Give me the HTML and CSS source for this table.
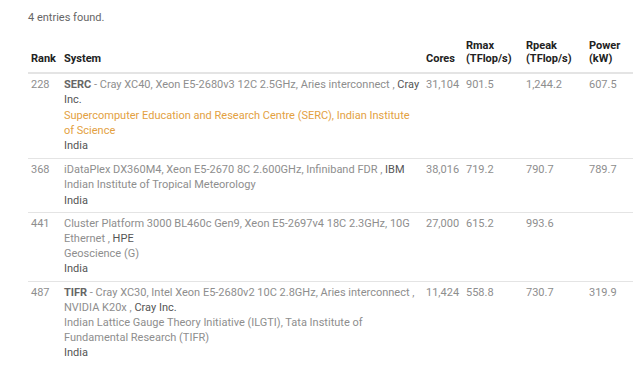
FILE: index.html
```html
<!DOCTYPE html>
<html>
<head>
<meta charset="utf-8">
<link rel="stylesheet" href="styles.css">
</head>
<body>
<div class="page">
  <p class="count">4 entries found.</p>
  <table class="list">
    <colgroup>
      <col class="c-rank"><col class="c-sys"><col class="c-cores"><col class="c-rmax"><col class="c-rpeak"><col class="c-power">
    </colgroup>
    <thead>
      <tr><th>Rank</th><th>System</th><th>Cores</th><th>Rmax<br>(TFlop/s)</th><th>Rpeak<br>(TFlop/s)</th><th>Power<br>(kW)</th></tr>
    </thead>
    <tbody>
      <tr class="first">
        <td>228</td>
        <td><b class="name">SERC</b> - Cray XC40, Xeon E5-2680v3 12C 2.5GHz, Aries interconnect , <span class="maker">Cray Inc.</span><br><span class="site orange">Supercomputer Education and Research Centre (SERC), Indian Institute of Science</span><br><span class="country">India</span></td>
        <td>31,104</td><td>901.5</td><td>1,244.2</td><td>607.5</td>
      </tr>
      <tr>
        <td>368</td>
        <td>iDataPlex DX360M4, Xeon E5-2670 8C 2.600GHz, Infiniband FDR , <span class="maker">IBM</span><br><span class="site">Indian Institute of Tropical Meteorology</span><br><span class="country">India</span></td>
        <td>38,016</td><td>719.2</td><td>790.7</td><td>789.7</td>
      </tr>
      <tr>
        <td>441</td>
        <td>Cluster Platform 3000 BL460c Gen9, Xeon E5-2697v4 18C 2.3GHz, 10G Ethernet , <span class="maker">HPE</span><br><span class="site">Geoscience (G)</span><br><span class="country">India</span></td>
        <td>27,000</td><td>615.2</td><td>993.6</td><td></td>
      </tr>
      <tr>
        <td>487</td>
        <td><b class="name">TIFR</b> - Cray XC30, Intel Xeon E5-2680v2 10C 2.8GHz, Aries interconnect , NVIDIA K20x , <span class="maker">Cray Inc.</span><br><span class="site">Indian Lattice Gauge Theory Initiative (ILGTI), Tata Institute of Fundamental Research (TIFR)</span><br><span class="country">India</span></td>
        <td>11,424</td><td>558.8</td><td>730.7</td><td>319.9</td>
      </tr>
    </tbody>
  </table>
</div>
</body>
</html>
```
FILE: styles.css
```css
html, body {
  margin: 0;
  padding: 0;
  background: #fff;
}
.page {
  padding: 10px 7px 0 28px;
  font-family: Roboto, "Liberation Sans", sans-serif;
  font-size: 11px;
  line-height: 15.2px;
  color: #8e8e8e;
}
.count {
  margin: 0 0 14px 0;
  color: #666;
}
.list {
  width: 605px;
  border-collapse: collapse;
  table-layout: fixed;
}
.c-rank { width: 33px; }
.c-sys { width: 362px; }
.c-cores { width: 40px; }
.c-rmax { width: 60px; }
.c-rpeak { width: 63px; }
.c-power { width: 47px; }
.list th {
  text-align: left;
  vertical-align: bottom;
  font-weight: bold;
  color: #222;
  line-height: 13px;
  padding: 0 3px 7px 3px;
  border-bottom: 2px solid #e4e4e4;
  white-space: nowrap;
}
.list td {
  vertical-align: top;
  padding: 3px 3px 4px 3px;
  border-bottom: 1px solid #e4e4e4;
}
.list tr.first td {
  padding-bottom: 5px;
}
.list tbody tr:last-child td {
  border-bottom: none;
}
.name {
  color: #666;
  font-weight: bold;
}
.maker {
  color: #555;
}
.orange {
  color: #e3a13f;
}
.country {
  color: #555;
}
```
